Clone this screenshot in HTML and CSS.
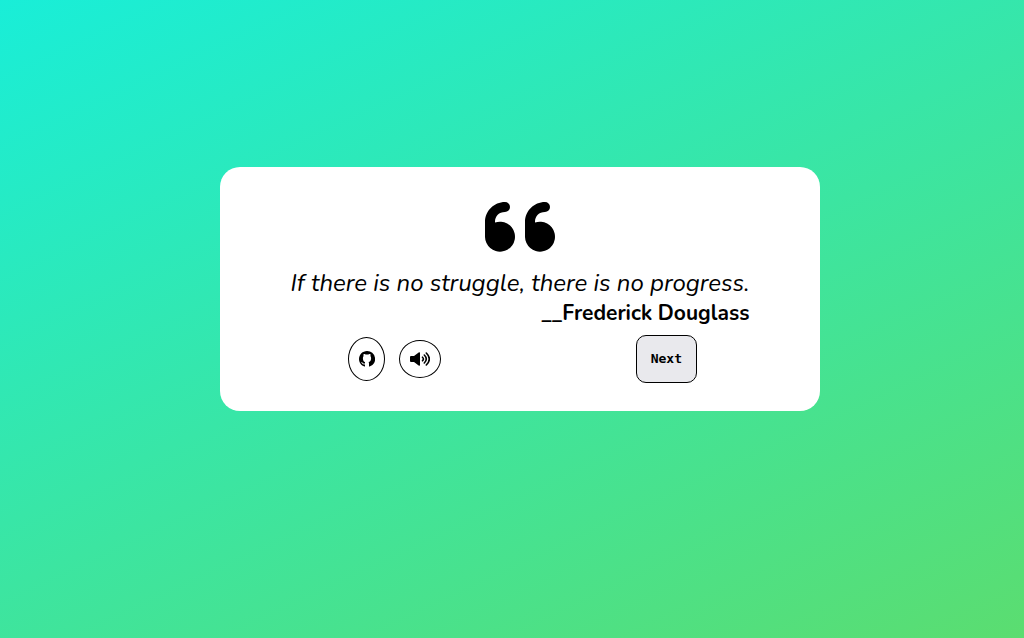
FILE: index.html
```html
<!DOCTYPE html>
<html lang="en">
<head>
<meta charset="utf-8">
<meta name="viewport" content="width=device-width, initial-scale=1">
<title>Quotes</title>
<link rel="stylesheet" href="styles.css">
</head>
<body>
<main class="card">
  <svg class="quote-mark" viewBox="0 0 70 50" aria-hidden="true">
    <path id="mark" d="M20 0A5 5 0 0 1 20 10C14 10 10 14 10 20V20.500A15 15 0 1 1 0 35V20C0 9 9 0 20 0Z"/>
    <use href="#mark" x="40"/>
  </svg>
  <figure class="quote">
    <blockquote class="text">If there is no struggle, there is no progress.</blockquote>
    <figcaption class="author">__Frederick Douglass</figcaption>
  </figure>
  <div class="actions">
    <div class="links">
      <a class="round github" href="#" aria-label="GitHub">
        <svg class="icon" viewBox="0 0 16 16" aria-hidden="true"><path d="M8 0C3.6 0 0 3.6 0 8c0 3.500 2.300 6.500 5.500 7.600.4.1.5-.2.5-.4v-1.700c-2.200.5-2.700-.9-2.700-.9-.4-.9-.9-1.200-.9-1.200-.7-.5.1-.5.1-.5.8.1 1.200.8 1.200.8.7 1.200 1.900.9 2.300.7V11C4.900 11 3.900 9.500 3.900 7.200c0-.9.2-1.600.7-2.200-.1-.2-.4-1 .1-2.100 0 0 .7-.2 2 .6a7.500 7.500 0 0 1 2.600 0c1.300-.8 2-.6 2-.6.5 1.100.2 1.900.1 2.100.5.6.7 1.300.7 2.200 0 2.300-1 3.600-2.600 3.800.3.300.5.800.5 1.500v2.700c0 .2.100.5.600.4A8 8 0 0 0 8 0Z"/></svg>
      </a>
      <button class="round sound" type="button" aria-label="Read aloud">
        <svg class="icon-wide" viewBox="0 0 20 14" aria-hidden="true">
          <path d="M1 4H4L9 .3Q10 0 10 1V13Q10 14 9 13.700L4 10H1Q0 10 0 9V5Q0 4 1 4Z"/>
          <path class="wave" d="M12.500 5.200Q14.300 7 12.500 8.800M14.300 3Q18.300 7 14.300 11M16.300 1Q22.300 7 16.300 13"/>
        </svg>
      </button>
    </div>
    <button class="next" type="button">Next</button>
  </div>
</main>
</body>
</html>
```
FILE: styles.css
```css
* {
  box-sizing: border-box;
}

body {
  margin: 0;
  min-height: 100vh;
  padding: 0 0 60px 16px;
  display: flex;
  align-items: center;
  justify-content: center;
  background: linear-gradient(155deg, #19eed8, #5bdd70);
  font-family: Nunito, "Open Sans", sans-serif;
  color: #000;
}

.card {
  width: 100%;
  max-width: 600px;
  padding: 35px 40px 28px;
  display: flex;
  flex-direction: column;
  align-items: center;
  border-radius: 20px;
  background: #fff;
}

.quote-mark {
  width: 70px;
  height: 50px;
  margin-bottom: 16px;
}

.quote {
  margin: 0;
}

.text {
  margin: 0;
  font: italic 24px/30px Nunito, "Open Sans", sans-serif;
}

.author {
  font: bold 21px/30px Nunito, Lato, sans-serif;
  text-align: right;
}

.actions {
  align-self: stretch;
  margin-top: 7px;
  padding: 0 83px 0 88px;
  display: flex;
  align-items: center;
  justify-content: space-between;
}

.links {
  display: flex;
  align-items: center;
  gap: 14px;
}

.round {
  display: flex;
  align-items: center;
  justify-content: center;
  padding: 0;
  border: 1px solid #000;
  border-radius: 50%;
  background: #fff;
  color: #000;
}

.github {
  width: 37px;
  height: 44px;
}

.sound {
  width: 42px;
  height: 38px;
}

.icon {
  width: 16px;
  height: 16px;
}

.icon-wide {
  width: 20px;
  height: 14px;
}

.wave {
  fill: none;
  stroke: currentColor;
  stroke-width: 1.6;
  stroke-linecap: round;
}

.next {
  padding: 15px 14px;
  border: 1px solid #000;
  border-radius: 10px;
  background: #e9e9ed;
  color: #000;
  font: bold 13px/16px "DejaVu Sans Mono", monospace;
}
```
